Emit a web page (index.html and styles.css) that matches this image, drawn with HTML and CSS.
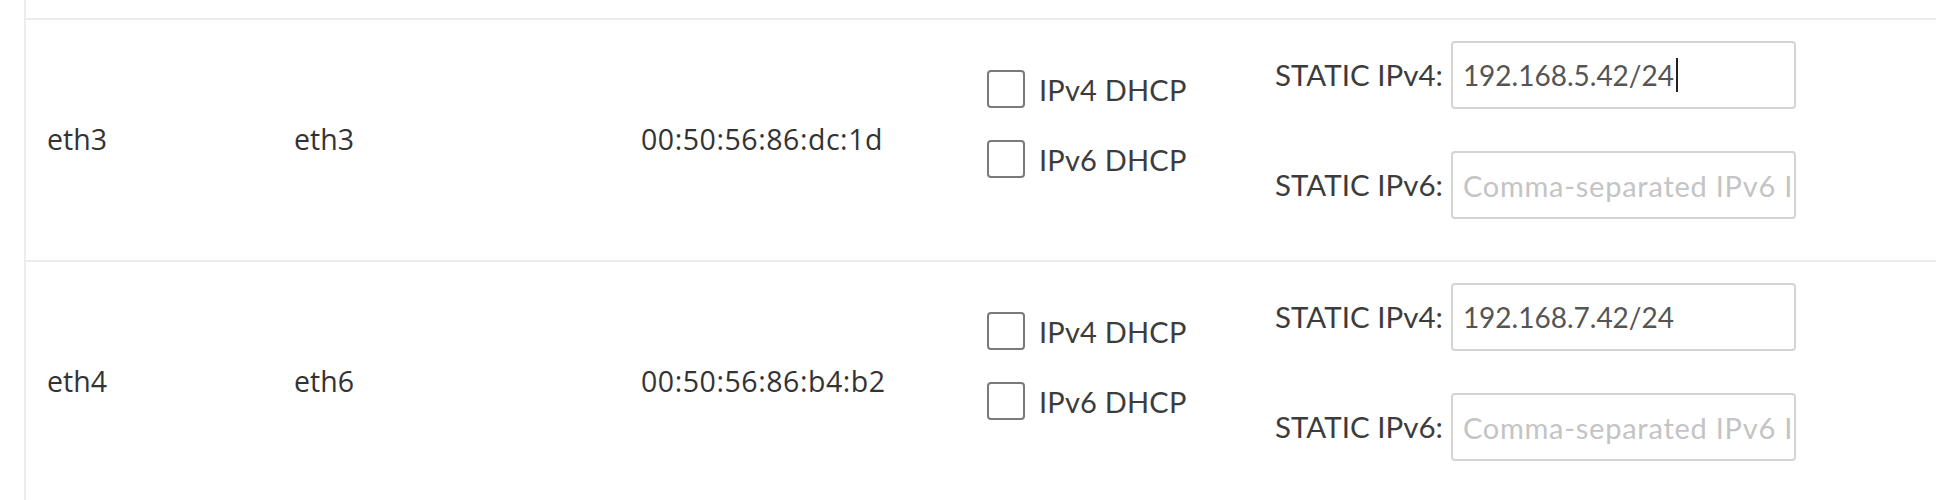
FILE: index.html
```html
<!DOCTYPE html>
<html>
<head>
<meta charset="utf-8">
<link rel="stylesheet" href="styles.css">
</head>
<body>
<div class="table">
  <div class="row-tail"></div>
  <div class="row">
    <div class="cell name">eth3</div>
    <div class="cell name">eth3</div>
    <div class="cell name mac">00:50:56:86:dc:1d</div>
    <div class="cell dhcp">
      <label class="check"><span class="box"></span><span class="check-label">IPv4 DHCP</span></label>
      <label class="check"><span class="box"></span><span class="check-label">IPv6 DHCP</span></label>
    </div>
    <div class="cell static">
      <div class="field"><span class="field-label">STATIC IPv4:</span><div class="input"><span class="value">192.168.5.42/24</span><span class="caret"></span></div></div>
      <div class="field"><span class="field-label">STATIC IPv6:</span><div class="input"><span class="placeholder">Comma-separated IPv6 IPs</span></div></div>
    </div>
  </div>
  <div class="row">
    <div class="cell name">eth4</div>
    <div class="cell name">eth6</div>
    <div class="cell name mac">00:50:56:86:b4:b2</div>
    <div class="cell dhcp">
      <label class="check"><span class="box"></span><span class="check-label">IPv4 DHCP</span></label>
      <label class="check"><span class="box"></span><span class="check-label">IPv6 DHCP</span></label>
    </div>
    <div class="cell static">
      <div class="field"><span class="field-label">STATIC IPv4:</span><div class="input"><span class="value">192.168.7.42/24</span></div></div>
      <div class="field"><span class="field-label">STATIC IPv6:</span><div class="input"><span class="placeholder">Comma-separated IPv6 IPs</span></div></div>
    </div>
  </div>
</div>
</body>
</html>
```
FILE: styles.css
```css
html, body {
  margin: 0;
  padding: 0;
  background: #ffffff;
}
body {
  width: 1936px;
  height: 500px;
  overflow: hidden;
}
.table {
  margin-left: 24px;
  border-left: 2px solid #ececec;
  min-height: 500px;
}
.row-tail {
  height: 18px;
}
.row {
  border-top: 2px solid #ececec;
  height: 240px;
  display: grid;
  grid-template-columns: 247px 347px 346px 288px 1fr;
  padding-left: 21px;
}
.cell {
  font-family: "Open Sans", "Noto Sans", sans-serif;
  font-size: 28.5px;
  color: #333;
}
.name {
  display: flex;
  align-items: center;
  padding-bottom: 2px;
}
.mac {
  letter-spacing: 0.55px;
}
.dhcp {
  display: flex;
  flex-direction: column;
  padding-top: 50px;
  gap: 32px;
  font-family: "Lato", sans-serif;
}
.check {
  display: flex;
  align-items: center;
  gap: 14px;
  height: 38px;
}
.box {
  width: 34px;
  height: 34px;
  border: 2px solid #7a7a7a;
  border-radius: 4px;
  flex: none;
}
.check-label {
  font-size: 29px;
  color: #3c3c3c;
  letter-spacing: 0.2px;
}
.static {
  display: flex;
  flex-direction: column;
  padding-top: 21px;
  gap: 42px;
  font-family: "Lato", sans-serif;
}
.field {
  display: flex;
  align-items: center;
  gap: 8px;
}
.field-label {
  font-size: 29.5px;
  color: #3c3c3c;
  padding-bottom: 2px;
}
.input {
  width: 323px;
  height: 64px;
  border: 2px solid #d4d4d4;
  border-radius: 4px;
  padding: 0 8px 0 10px;
  display: flex;
  align-items: center;
  overflow: hidden;
  white-space: nowrap;
  font-size: 29px;
}
.value {
  color: #555;
  font-size: 28px;
}
.caret {
  display: inline-block;
  width: 2px;
  height: 34px;
  background: #222;
  margin-left: 2px;
}
.placeholder {
  color: #c4c4c4;
  letter-spacing: 0.75px;
}
```
